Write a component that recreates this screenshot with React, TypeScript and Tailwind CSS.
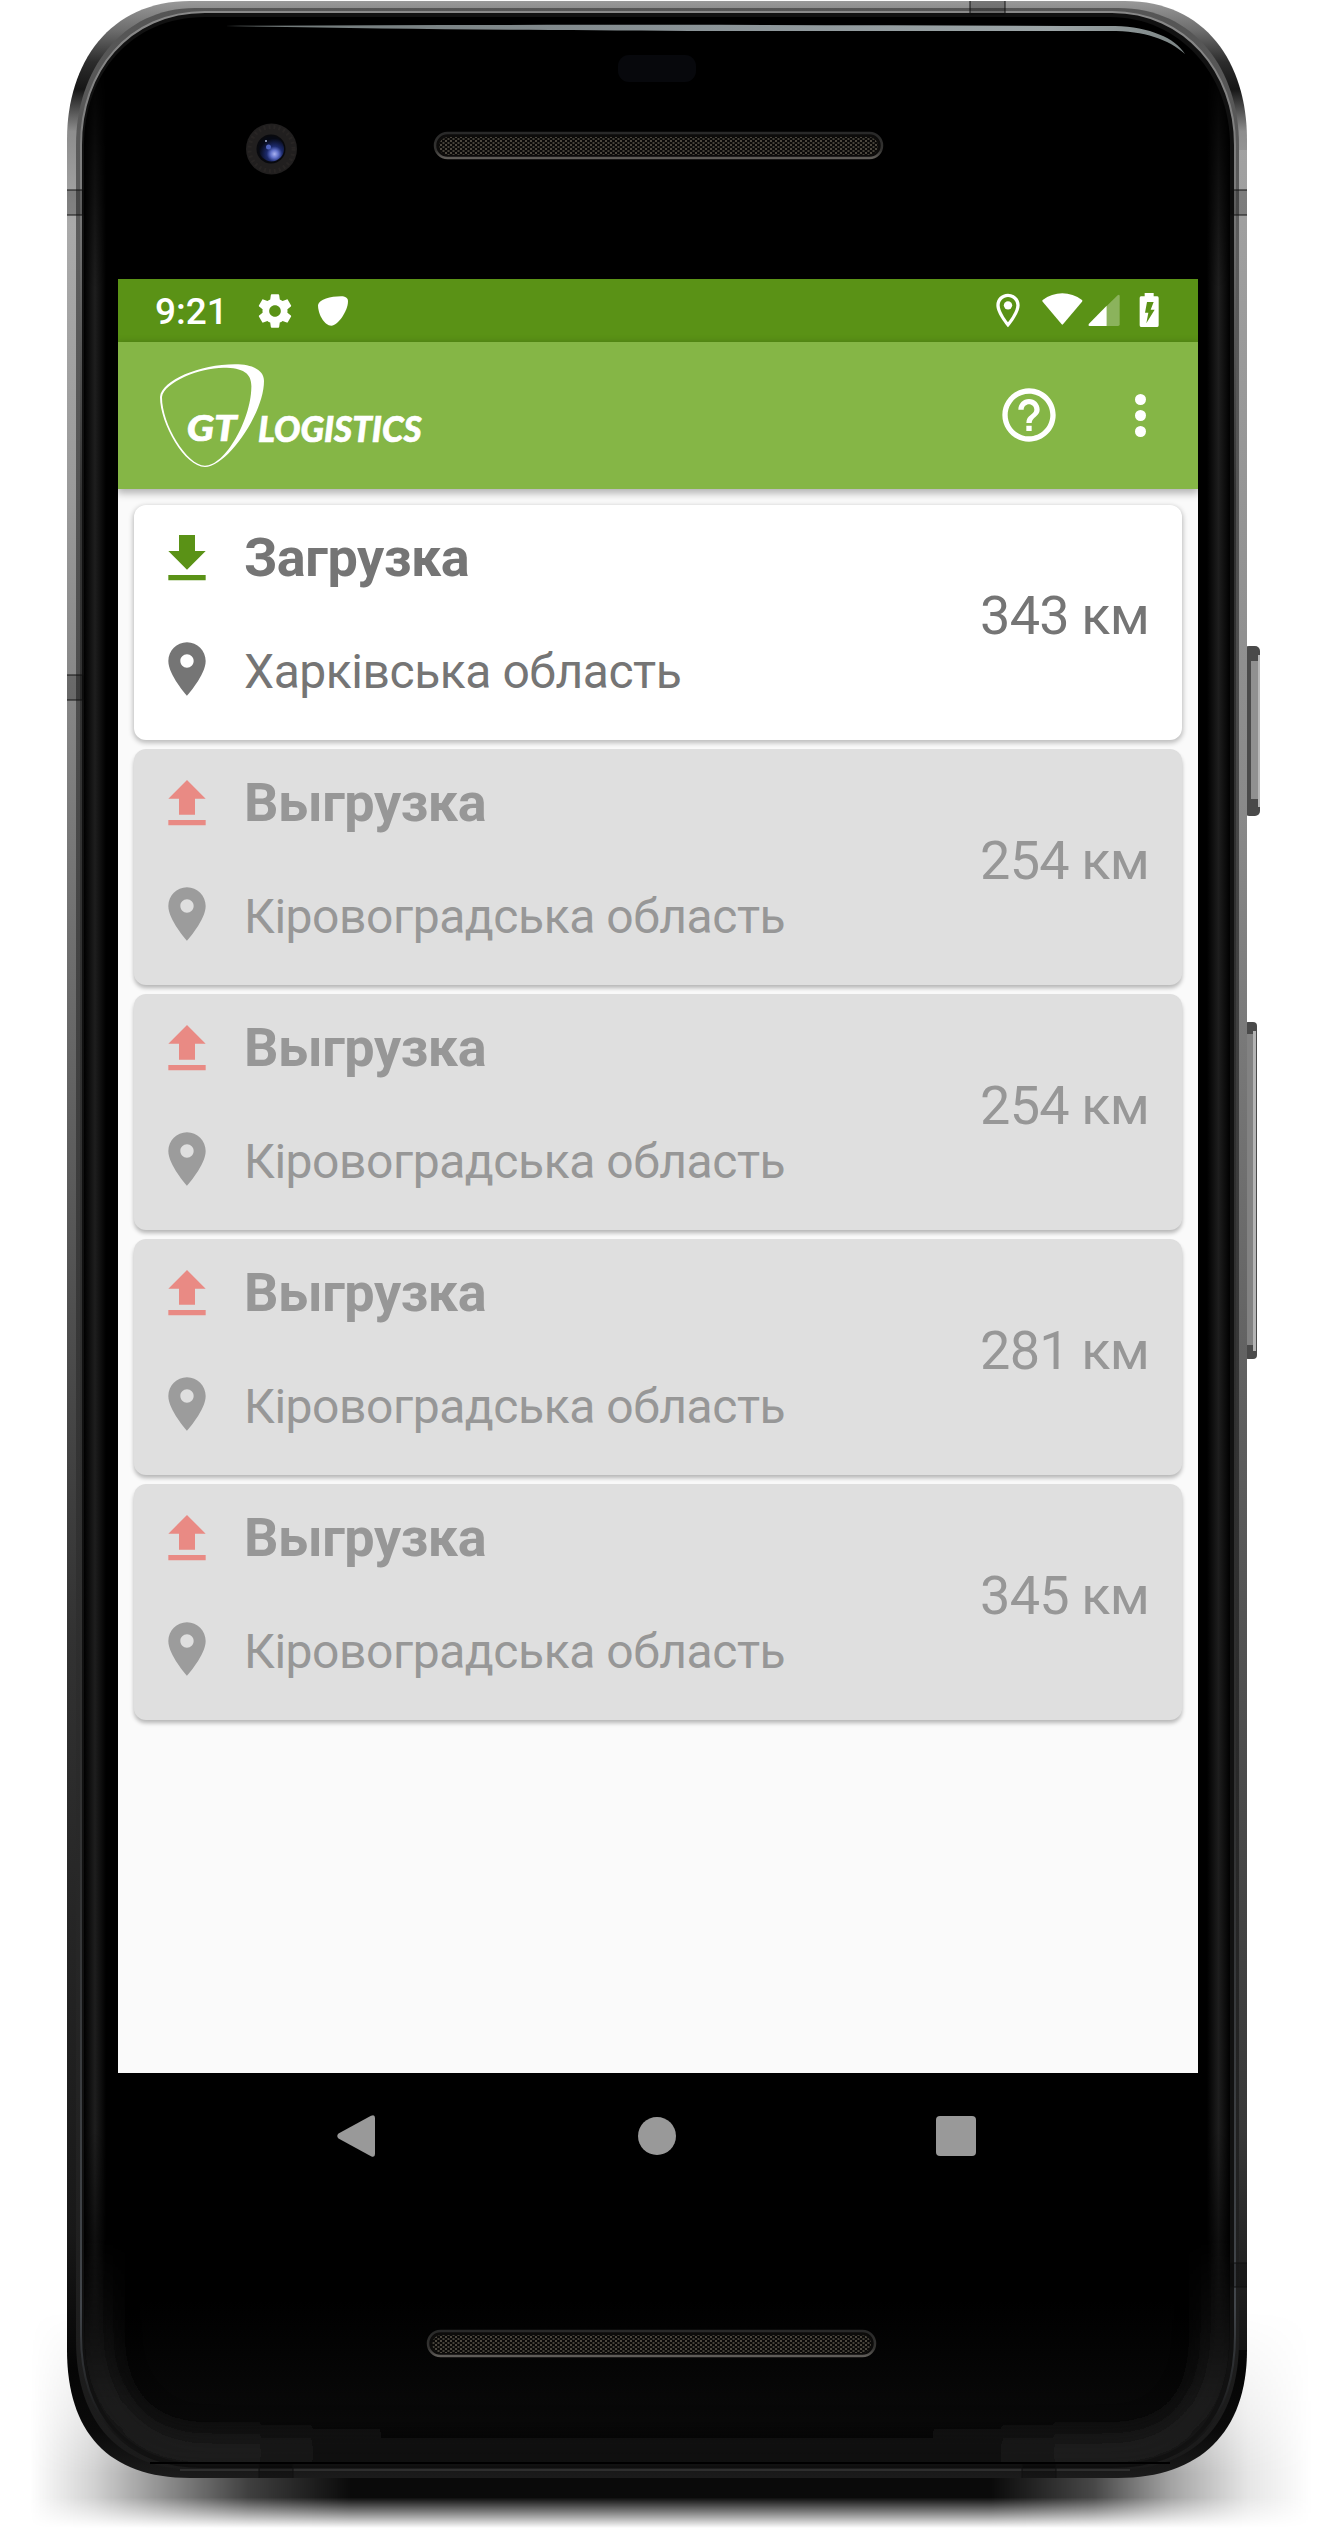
import React from "react";

type Stop = { kind: "load" | "unload"; title: string; region: string; distance: string };

const stops: Stop[] = [
  { kind: "load", title: "Загрузка", region: "Харківська область", distance: "343 км" },
  { kind: "unload", title: "Выгрузка", region: "Кіровоградська область", distance: "254 км" },
  { kind: "unload", title: "Выгрузка", region: "Кіровоградська область", distance: "254 км" },
  { kind: "unload", title: "Выгрузка", region: "Кіровоградська область", distance: "281 км" },
  { kind: "unload", title: "Выгрузка", region: "Кіровоградська область", distance: "345 км" },
];

function Grille({ x, y }: { x: number; y: number }) {
  return (
    <g>
      <rect x={x + 1} y={y + 1} width="447" height="25" rx="12.5" fill="#0d0c0b" stroke="url(#grilleEdge)" strokeWidth="2.5" />
      <rect x={x + 5} y={y + 5} width="439" height="18" rx="9" fill="url(#mesh)" />
    </g>
  );
}

/* Phone body: metal frame, glass, speakers, camera and side keys. */
function DeviceBody() {
  return (
    <svg className="absolute inset-0" width="1330" height="2532" viewBox="0 0 1330 2532" fill="none">
      <defs>
        <linearGradient id="frame" x1="0" y1="0" x2="0" y2="2480" gradientUnits="userSpaceOnUse">
          <stop offset="0" stopColor="#9a9a9a" />
          <stop offset="0.012" stopColor="#6e6e6e" />
          <stop offset="0.025" stopColor="#2c2c2c" />
          <stop offset="0.036" stopColor="#161616" />
          <stop offset="0.053" stopColor="#8d8d8d" />
          <stop offset="0.09" stopColor="#aaaaaa" />
          <stop offset="0.2" stopColor="#9a9a9a" />
          <stop offset="0.33" stopColor="#7a7a7a" />
          <stop offset="0.5" stopColor="#565656" />
          <stop offset="0.66" stopColor="#323232" />
          <stop offset="0.9" stopColor="#181818" />
          <stop offset="0.955" stopColor="#050505" />
          <stop offset="0.98" stopColor="#0a0a0a" />
          <stop offset="1" stopColor="#1c1c1c" />
        </linearGradient>
        <linearGradient id="frameRight" x1="0" y1="140" x2="0" y2="2350" gradientUnits="userSpaceOnUse">
          <stop offset="0" stopColor="#a2a2a2" />
          <stop offset="0.3" stopColor="#8a8a8a" />
          <stop offset="0.55" stopColor="#626262" />
          <stop offset="0.9" stopColor="#383838" />
          <stop offset="1" stopColor="#141414" />
        </linearGradient>
        <linearGradient id="innerFrame" x1="0" y1="0" x2="0" y2="2480" gradientUnits="userSpaceOnUse">
          <stop offset="0" stopColor="#555" />
          <stop offset="0.1" stopColor="#5c5c5c" />
          <stop offset="0.4" stopColor="#424242" />
          <stop offset="0.7" stopColor="#2b2b2b" />
          <stop offset="1" stopColor="#1a1a1a" />
        </linearGradient>
        <linearGradient id="rim" x1="0" y1="0" x2="0" y2="2480" gradientUnits="userSpaceOnUse">
          <stop offset="0" stopColor="#8a8a8a" />
          <stop offset="0.08" stopColor="#7a7a7a" />
          <stop offset="0.2" stopColor="#333" />
          <stop offset="0.7" stopColor="#303030" />
          <stop offset="0.93" stopColor="#41454a" />
          <stop offset="0.98" stopColor="#161616" />
          <stop offset="1" stopColor="#0c0c0c" />
        </linearGradient>
        <linearGradient id="glow" x1="0" y1="0" x2="1" y2="0">
          <stop offset="0" stopColor="#1e1e1e" stopOpacity="0" />
          <stop offset="0.5" stopColor="#1e1e1e" />
          <stop offset="1" stopColor="#1e1e1e" stopOpacity="0" />
        </linearGradient>
        <linearGradient id="glowY" x1="0" y1="60" x2="0" y2="2360" gradientUnits="userSpaceOnUse">
          <stop offset="0" stopColor="#fff" stopOpacity="0" />
          <stop offset="0.1" stopColor="#fff" />
          <stop offset="0.9" stopColor="#fff" />
          <stop offset="1" stopColor="#fff" stopOpacity="0" />
        </linearGradient>
        <mask id="glowMask" maskUnits="userSpaceOnUse" x="0" y="60" width="1330" height="2300">
          <rect y="60" width="1330" height="2300" fill="url(#glowY)" />
        </mask>
        <linearGradient id="cornerY" x1="0" y1="2240" x2="0" y2="2400" gradientUnits="userSpaceOnUse">
          <stop offset="0" stopColor="#fff" stopOpacity="0" />
          <stop offset="1" stopColor="#fff" />
        </linearGradient>
        <mask id="cornerMask" maskUnits="userSpaceOnUse" x="0" y="2200" width="1330" height="300">
          <rect y="2200" width="1330" height="300" fill="url(#cornerY)" />
        </mask>
        <linearGradient id="glassBottom" x1="0" y1="2300" x2="0" y2="2462" gradientUnits="userSpaceOnUse">
          <stop offset="0" stopColor="#000" />
          <stop offset="1" stopColor="#0c0c0c" />
        </linearGradient>
        <linearGradient id="cornerX" x1="84" y1="0" x2="1230" y2="0" gradientUnits="userSpaceOnUse">
          <stop offset="0" stopColor="#242424" />
          <stop offset="0.12" stopColor="#242424" />
          <stop offset="0.3" stopColor="#0c0c0c" />
          <stop offset="0.7" stopColor="#0c0c0c" />
          <stop offset="0.88" stopColor="#242424" />
          <stop offset="1" stopColor="#242424" />
        </linearGradient>
        <linearGradient id="sheen" x1="225" y1="0" x2="1186" y2="0" gradientUnits="userSpaceOnUse">
          <stop offset="0" stopColor="#6f7777" />
          <stop offset="0.5" stopColor="#8b9498" />
          <stop offset="0.86" stopColor="#9ca5a7" />
          <stop offset="1" stopColor="#7c8585" />
        </linearGradient>
        <linearGradient id="grilleEdge" x1="0" y1="0" x2="0" y2="1">
          <stop offset="0" stopColor="#292929" />
          <stop offset="0.7" stopColor="#353432" />
          <stop offset="1" stopColor="#605d59" />
        </linearGradient>
        <pattern id="mesh" width="5" height="4" patternUnits="userSpaceOnUse">
          <rect width="5" height="4" fill="#0b0a09" />
          <rect width="2" height="2" fill="#4d483f" />
          <rect x="2.5" y="2" width="2" height="2" fill="#454139" />
        </pattern>
        <radialGradient id="lens" cx="0.62" cy="0.7" r="0.62">
          <stop offset="0" stopColor="#a9b2f0" />
          <stop offset="0.25" stopColor="#6272cb" />
          <stop offset="0.5" stopColor="#1c2a6c" />
          <stop offset="1" stopColor="#060914" />
        </radialGradient>
        <linearGradient id="shadowX" x1="30" y1="0" x2="1312" y2="0" gradientUnits="userSpaceOnUse">
          <stop offset="0" stopColor="#000" stopOpacity="0" />
          <stop offset="0.05" stopColor="#000" stopOpacity="0.18" />
          <stop offset="0.1" stopColor="#000" stopOpacity="0.42" />
          <stop offset="0.17" stopColor="#000" stopOpacity="0.75" />
          <stop offset="0.25" stopColor="#000" stopOpacity="0.96" />
          <stop offset="0.75" stopColor="#000" stopOpacity="0.96" />
          <stop offset="0.83" stopColor="#000" stopOpacity="0.72" />
          <stop offset="0.89" stopColor="#000" stopOpacity="0.36" />
          <stop offset="0.95" stopColor="#000" stopOpacity="0.1" />
          <stop offset="1" stopColor="#000" stopOpacity="0" />
        </linearGradient>
        <linearGradient id="shadowY" x1="0" y1="2310" x2="0" y2="2528" gradientUnits="userSpaceOnUse">
          <stop offset="0" stopColor="#fff" stopOpacity="0" />
          <stop offset="0.5" stopColor="#fff" stopOpacity="0.6" />
          <stop offset="0.75" stopColor="#fff" />
          <stop offset="0.86" stopColor="#fff" />
          <stop offset="0.93" stopColor="#fff" stopOpacity="0.5" />
          <stop offset="1" stopColor="#fff" stopOpacity="0" />
        </linearGradient>
        <mask id="shadowMask" maskUnits="userSpaceOnUse" x="0" y="2300" width="1330" height="232">
          <rect y="2300" width="1330" height="232" fill="url(#shadowY)" />
        </mask>
        <clipPath id="glassClip">
          <path d="M205 17H1110C1180 17 1230 75 1230 145V2330C1230 2415 1190 2464 1110 2464H205C130 2464 84 2415 84 2330V145C84 75 130 17 205 17Z" />
        </clipPath>
        <filter id="soft" filterUnits="userSpaceOnUse" x="0" y="2100" width="1330" height="432">
          <feGaussianBlur stdDeviation="14" />
        </filter>
      </defs>

      <rect x="30" y="2300" width="1282" height="232" fill="url(#shadowX)" mask="url(#shadowMask)" />

      {/* side keys */}
      <rect x="1244" y="646" width="16" height="170" rx="5" fill="#4a4a4a" />
      <rect x="1251" y="661" width="7" height="138" fill="#909090" />
      <rect x="1258" y="655" width="2" height="152" fill="#b8b8b8" />
      <rect x="1244" y="1022" width="13" height="337" rx="4" fill="#4a4a4a" />
      <rect x="1247" y="1034" width="6" height="311" fill="#828282" />
      <rect x="1253" y="1031" width="3" height="320" fill="#b4b4b4" />

      {/* metal frame */}
      <path d="M190 1H1125C1205 1 1247 62 1247 140V2350C1247 2432 1200 2478 1118 2478H190C108 2478 67 2432 67 2350V140C67 62 110 1 190 1Z" fill="url(#frame)" />
      <rect x="1236" y="150" width="11" height="2200" fill="url(#frameRight)" />
      <path d="M195 8H1118C1195 8 1239 70 1239 145V2340C1239 2424 1195 2470 1113 2470H198C120 2470 76 2424 76 2340V145C76 70 122 8 195 8Z" fill="url(#innerFrame)" />
      <path d="M205 12H1112C1185 12 1235 72 1235 145V2335C1235 2419 1192 2467 1112 2467H203C126 2467 81 2417 81 2335V145C81 72 128 12 205 12Z" fill="#111" stroke="url(#rim)" strokeWidth="2" />
      <path d="M205 17H1110C1180 17 1230 75 1230 145V2330C1230 2415 1190 2464 1110 2464H205C130 2464 84 2415 84 2330V145C84 75 130 17 205 17Z" fill="url(#glassBottom)" />
      <g clipPath="url(#glassClip)">
        <g mask="url(#glowMask)">
          <rect x="84" y="60" width="22" height="2300" fill="url(#glow)" />
          <rect x="1207" y="60" width="23" height="2300" fill="url(#glow)" />
        </g>
        <g mask="url(#cornerMask)">
          <path d="M94 2200V2330C94 2408 137 2453 205 2453H1110C1183 2453 1220 2408 1220 2330V2200" stroke="url(#cornerX)" strokeWidth="30" filter="url(#soft)" />
        </g>
      </g>
      <path d="M150 2463H1170" stroke="#000" strokeWidth="2" />
      <path d="M180 2470H1130" stroke="#2e2e2e" strokeWidth="2" />

      {/* antenna bands */}
      <g fill="#000" fillOpacity="0.22">
        <rect x="67" y="190" width="17" height="25" />
        <rect x="67" y="675" width="17" height="25" />
        <rect x="1230" y="190" width="17" height="25" />
        <rect x="1230" y="2263" width="17" height="24" />
        <rect x="970" y="1" width="35" height="14" />
        <rect x="259" y="2464" width="34" height="14" />
        <rect x="1022" y="2464" width="34" height="14" />
      </g>
      <path
        d="M67 190H84M67 215H84M67 675H84M67 700H84M1230 190H1247M1230 215H1247M1230 2263H1247M1230 2287H1247M970 1V15M1005 1V15M259 2464V2478M293 2464V2478M1022 2464V2478M1056 2464V2478"
        stroke="#111"
        strokeOpacity="0.65"
        strokeWidth="1.5"
      />

      <path d="M225 26C500 24 800 25 1115 26C1150 27 1175 38 1185 54C1168 39 1145 31 1110 31H690C500 30 380 29 225 26Z" fill="url(#sheen)" />
      <rect x="618" y="55" width="78" height="27" rx="11" fill="#07080c" />

      <circle cx="271.500" cy="149" r="25.500" fill="#211f1f" />
      <circle cx="271.500" cy="149" r="22" stroke="#282524" strokeWidth="4" strokeDasharray="2 3" />
      <circle cx="271" cy="149" r="14.500" fill="#08090e" />
      <circle cx="271.500" cy="149" r="12.500" fill="url(#lens)" />
      <circle cx="268.500" cy="147" r="2.500" fill="#4f63bd" />
      <circle cx="266" cy="141" r="1" fill="#a9b3d8" />

      <Grille x={434} y={132} />
      <Grille x={427} y={2330} />
    </svg>
  );
}

function StatusBar() {
  return (
    <div className="flex h-[63px] items-center bg-[#5a9216] pl-[37px] pr-[39px] text-white">
      <span className="mt-[3px] w-[76px] whitespace-nowrap text-[37px] font-medium leading-[44px]">9:21</span>
      <svg className="ml-[24px]" width="40" height="40" viewBox="0 0 24 24" fill="currentColor">
        <path d="M19.43 12.98c.04-.32.07-.64.07-.98s-.03-.66-.07-.98l2.11-1.65c.19-.15.24-.42.12-.64l-2-3.46c-.12-.22-.39-.3-.61-.22l-2.49 1c-.52-.4-1.08-.73-1.690-.98l-.38-2.65C14.460 2.180 14.250 2 14 2h-4c-.25 0-.46.18-.49.42l-.38 2.650c-.61.25-1.170.59-1.690.98l-2.490-1c-.23-.09-.49 0-.61.22l-2 3.460c-.13.22-.07.49.12.64l2.110 1.650c-.04.32-.07.65-.07.98s.03.66.07.98l-2.110 1.650c-.19.15-.24.42-.12.64l2 3.460c.12.22.39.3.61.22l2.490-1c.52.4 1.080.73 1.690.98l.38 2.650c.03.24.24.42.49.42h4c.25 0 .46-.18.49-.42l.38-2.650c.61-.25 1.170-.59 1.690-.98l2.490 1c.23.09.49 0 .61-.22l2-3.460c.12-.22.07-.49-.12-.64l-2.110-1.650zM12 15.500c-1.930 0-3.500-1.570-3.500-3.500s1.570-3.500 3.500-3.500 3.500 1.570 3.500 3.500-1.570 3.500-3.500 3.500z" />
      </svg>
      <svg className="ml-[23px]" width="30" height="30" viewBox="624 77 90 90" fill="currentColor">
        <path d="M624 104C627 87 662 78 693 78C706 78 714 83 714 93C714 123 683 166 664 166C643 166 624 132 624 104Z" />
      </svg>
      <svg className="ml-auto" width="163" height="35" viewBox="289 69 489 105" fill="currentColor">
        <path fillRule="evenodd" d="M325 71C305 71 290 86 290 106C290 132 325 172 325 172S360 132 360 106C360 86 345 71 325 71ZM325 81C339 81 350 92 350 106C350 122 334 146 325 157C316 146 300 122 300 106C300 92 311 81 325 81Z" />
        <circle cx="325" cy="106" r="12.500" />
        <path d="M429 90C464 63 512 63 547 90Q549 92 547 95L490 163Q488 165 486 163L429 95Q427 92 429 90Z" />
        <path fillOpacity="0.3" d="M621 108L654 76Q660 72 660 79V163Q660 168 655 168H621Z" />
        <path d="M621 107V168H570Q564 167 568 161Z" />
        <path fillRule="evenodd" d="M735 69H762V79H773Q777 79 777 84V166Q777 171 773 171H724Q720 171 720 166V84Q720 79 724 79H735ZM742 96L736 128H746L740 160L765 119H753L762 96Z" />
      </svg>
    </div>
  );
}

function AppBar() {
  return (
    <div className="relative z-10 flex h-[147px] items-center bg-[#85b646] pl-[42px] pr-[37px] text-white shadow-[0_3px_8px_1px_rgba(0,0,0,0.3)]">
      <svg width="264" height="104" viewBox="150 281 792 312" fill="currentColor">
        <path fillRule="evenodd" d="M150 380C155 330 270 282 375 282C430 282 462 300 462 332C462 430 350 590 285 590C225 590 150 460 150 380ZM156 380C162 335 270 292 340 292C402 292 426 310 424 352C422 450 345 586 285 586C230 586 155 460 156 380Z" />
        <text x="230" y="511" fontFamily="Lato" fontWeight="900" fontStyle="italic" fontSize="106" textLength="150" lengthAdjust="spacingAndGlyphs" stroke="currentColor" strokeWidth="2">GT</text>
        <text x="444" y="516" fontFamily="Lato" fontWeight="900" fontStyle="italic" fontSize="107" textLength="491" lengthAdjust="spacingAndGlyphs" stroke="currentColor" strokeWidth="2">LOGISTICS</text>
      </svg>
      <svg className="ml-auto -mt-px" width="64" height="64" viewBox="0 0 24 24" fill="currentColor">
        <path d="M11 18h2v-2h-2v2zm1-16C6.480 2 2 6.480 2 12s4.480 10 10 10 10-4.480 10-10S17.520 2 12 2zm0 18c-4.410 0-8-3.590-8-8s3.590-8 8-8 8 3.590 8 8-3.590 8-8 8zm0-14c-2.210 0-4 1.790-4 4h2c0-1.100.9-2 2-2s2 .9 2 2c0 2-3 1.750-3 5h2c0-2.250 3-2.500 3-5 0-2.210-1.790-4-4-4z" />
      </svg>
      <div className="ml-[58px] flex w-[42px] flex-col items-center gap-[5px]">
        <span className="size-[11px] rounded-full bg-white" />
        <span className="size-[11px] rounded-full bg-white" />
        <span className="size-[11px] rounded-full bg-white" />
      </div>
    </div>
  );
}

function StopCard({ stop }: { stop: Stop }) {
  const active = stop.kind === "load";
  return (
    <div
      className={
        active
          ? "flex h-[235px] items-start rounded-[12px] bg-white pl-[21px] pr-[33px] pt-[23px] text-[#757575] shadow-[0_2px_5px_1px_rgba(0,0,0,0.25)]"
          : "flex h-[235px] items-start rounded-[12px] bg-[#dfdfdf] pl-[21px] pr-[33px] pt-[23px] text-[#979797] shadow-[0_-1px_0_0_#dfdfdf,0_3px_4px_0px_rgba(0,0,0,0.28)]"
      }
    >
      <div className="flex flex-col gap-[46px]">
        <div className="flex h-[64px] items-center gap-[25px]">
          <svg className={active ? "-mt-[2px] text-[#5a9216]" : "-mt-[2px] text-[#e98a84]"} width="64" height="64" viewBox="0 0 24 24" fill="currentColor">
            <path d={active ? "M19 9h-4V3H9v6H5l7 7 7-7zM5 18v2h14v-2H5z" : "M5 20h14v-2H5v2zM9 16h6v-6h4l-7-7-7 7h4z"} />
          </svg>
          <span className="mb-[5px] whitespace-nowrap text-[54px] font-bold leading-[63px] tracking-[-0.5px]">{stop.title}</span>
        </div>
        <div className="flex h-[64px] items-center gap-[25px]">
          <svg className={active ? "-mt-[2px]" : "-mt-[2px] text-[#9c9c9c]"} width="64" height="64" viewBox="0 0 24 24" fill="currentColor">
            <path d="M12 2C8.130 2 5 5.130 5 9c0 5.250 7 13 7 13s7-7.750 7-13c0-3.870-3.130-7-7-7zm0 9.500c-1.380 0-2.500-1.120-2.500-2.500s1.120-2.500 2.500-2.500 2.500 1.120 2.500 2.500-1.120 2.500-2.500 2.500z" />
          </svg>
          <span className="mt-[3px] whitespace-nowrap text-[48px] leading-[56px] tracking-[-0.45px]">{stop.region}</span>
        </div>
      </div>
      <span className="ml-auto mt-[56px] whitespace-nowrap text-[54px] leading-[63px] tracking-[-0.8px]">{stop.distance}</span>
    </div>
  );
}

function NavBar() {
  return (
    <div className="flex h-[126px] items-center justify-between bg-black pl-[219px] pr-[222px] text-[#999999]">
      <svg width="39" height="42" viewBox="0 0 39 42" fill="currentColor">
        <path d="M1.500 18.500L34 .8Q38 -1 38 3V39Q38 43 34 41.200L1.500 23.500Q-1 21 1.500 18.500Z" />
      </svg>
      <span className="ml-[2px] size-[38px] rounded-full bg-[#999999]" />
      <span className="size-[40px] rounded-[4px] bg-[#999999]" />
    </div>
  );
}

export default function App() {
  return (
    <div className="relative h-[2532px] w-[1330px] overflow-hidden bg-white pl-[118px] pt-[279px] font-['Roboto',sans-serif]">
      <DeviceBody />
      <main className="relative flex h-[1920px] w-[1080px] flex-col overflow-hidden bg-[#fafafa]">
        <StatusBar />
        <AppBar />
        <div className="flex flex-1 flex-col gap-[10px] px-[16px] pt-[16px]">
          {stops.map((stop, i) => (
            <StopCard key={i} stop={stop} />
          ))}
        </div>
        <NavBar />
      </main>
    </div>
  );
}
